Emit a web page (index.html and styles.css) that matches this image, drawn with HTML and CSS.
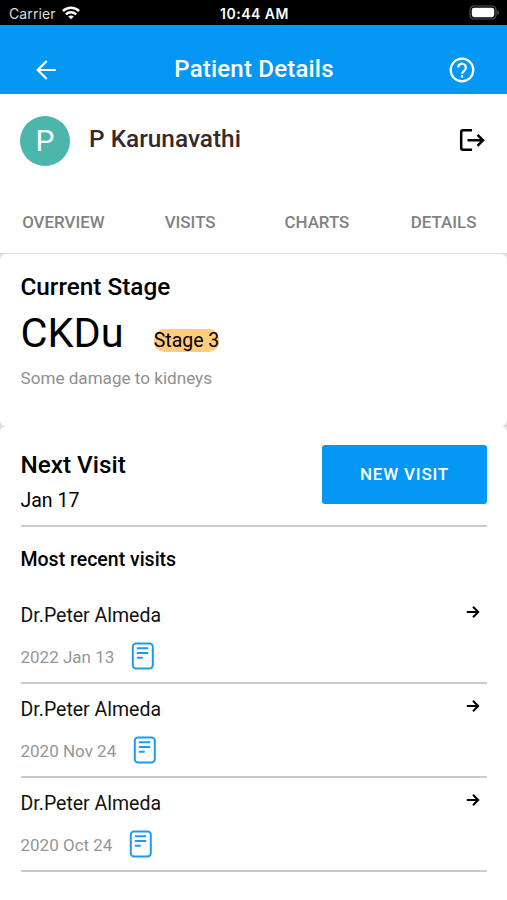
FILE: index.html
```html
<!DOCTYPE html>
<html lang="en">
<head>
<meta charset="utf-8">
<title>Patient Details</title>
<link rel="stylesheet" href="styles.css">
</head>
<body>
<div class="status">
  <div class="carrier"><span>Carrier</span>
    <svg width="18" height="14" viewBox="0 0 18 14" fill="none" stroke="#fff" stroke-width="2.500"><path d="M.9 5C5.500 .6 12.500 .6 17.100 5M3.900 8.300c2.900-2.700 7.300-2.700 10.200 0"/><path d="M9 13.300 6.200 10.500c1.500-1.400 4.100-1.400 5.600 0z" fill="#fff" stroke="none"/></svg>
  </div>
  <div class="time">10:44 AM</div>
  <svg class="battery" width="31" height="16" viewBox="0 0 31 16"><rect x="1" y="1" width="26" height="13" rx="4" fill="none" stroke="#555" stroke-width="1.200"/><rect x="2.800" y="2.800" width="22.400" height="9.400" rx="2.400" fill="#fff"/><path d="M28.500 5.200v4.600c1.600-.5 1.600-4.100 0-4.600z" fill="#666"/></svg>
</div>
<header class="bar">
  <svg class="back" width="20" height="20" viewBox="0 0 20 20" fill="none" stroke="#fff" stroke-width="2.200"><path d="M19.800 10H1.700M10.700 1 1.700 10l9 9"/></svg>
  <h1>Patient Details</h1>
  <svg class="help" width="26" height="26" viewBox="0 0 26 26" fill="none" stroke="#fff" stroke-width="2.200"><circle cx="13" cy="13" r="11.300"/><path d="M9.100 10.600a3.900 3.900 0 1 1 6.300 3.100c-1.500 1.100-2.400 1.700-2.400 3.300"/><path d="M13 18.200v2.300"/></svg>
</header>
<section class="profile">
  <div class="avatar">P</div>
  <h2>P Karunavathi</h2>
  <svg class="exit" width="26" height="24" viewBox="0 0 26 24" fill="none" stroke="#000" stroke-width="2.500"><path d="M13 2.300H4.200q-2 0-2 2v15.400q0 2 2 2H13"/><path d="M8.500 12.300H24M18.500 6.800l5.500 5.500-5.500 5.500"/></svg>
</section>
<nav class="tabs"><a>OVERVIEW</a><a>VISITS</a><a>CHARTS</a><a>DETAILS</a></nav>
<main>
  <section class="card stage">
    <h3>Current Stage</h3>
    <div class="stage-row"><span class="disease">CKDu</span><span class="chip">Stage 3</span></div>
    <p>Some damage to kidneys</p>
  </section>
  <section class="card visits">
    <div class="next">
      <div><h3>Next Visit</h3><div class="date">Jan 17</div></div>
      <button>NEW VISIT</button>
    </div>
    <h4>Most recent visits</h4>
    <article>
      <div class="doctor"><span>Dr.Peter Almeda</span><svg width="14" height="14" viewBox="0 0 14 14"><path d="M.8 7H12M7 1.800 12.200 7 7 12.200"/></svg></div>
      <div class="when"><span>2022 Jan 13</span><svg width="24" height="28" viewBox="0 0 24 28"><rect x="1.800" y="1.500" width="20" height="25" rx="3.200"/><path d="M5.800 6.300h11.400M5.800 11h11.400M5.800 15.700h6"/></svg></div>
    </article>
    <article>
      <div class="doctor"><span>Dr.Peter Almeda</span><svg width="14" height="14" viewBox="0 0 14 14"><path d="M.8 7H12M7 1.800 12.200 7 7 12.200"/></svg></div>
      <div class="when"><span>2020 Nov 24</span><svg width="24" height="28" viewBox="0 0 24 28"><rect x="1.800" y="1.500" width="20" height="25" rx="3.200"/><path d="M5.800 6.300h11.400M5.800 11h11.400M5.800 15.700h6"/></svg></div>
    </article>
    <article>
      <div class="doctor"><span>Dr.Peter Almeda</span><svg width="14" height="14" viewBox="0 0 14 14"><path d="M.8 7H12M7 1.800 12.200 7 7 12.200"/></svg></div>
      <div class="when"><span>2020 Oct 24</span><svg width="24" height="28" viewBox="0 0 24 28"><rect x="1.800" y="1.500" width="20" height="25" rx="3.200"/><path d="M5.800 6.300h11.400M5.800 11h11.400M5.800 15.700h6"/></svg></div>
    </article>
  </section>
</main>
</body>
</html>
```
FILE: styles.css
```css
* { box-sizing: border-box; }
body { margin: 0; height: 900px; overflow: hidden; display: flex; flex-direction: column; background: #fff; font-family: Roboto, sans-serif; color: #000; }
h1, h2, h3, h4, p { margin: 0; font-weight: 500; }
svg { display: block; flex: none; }
.status { height: 25px; flex: none; background: #000; color: #fff; display: grid; grid-template-columns: 1fr auto 1fr; align-items: center; padding: 2px 7px 0 9px; font: 14px/20px Inter, sans-serif; }
.carrier { display: flex; align-items: center; gap: 6px; color: #ddd; letter-spacing: .1px; }
.carrier svg { margin-top: -2px; }
.time { font-weight: 600; font-size: 14px; letter-spacing: .5px; }
.battery { justify-self: end; margin-top: -1px; }
.bar { height: 69px; flex: none; background: #0497f3; color: #fff; display: grid; grid-template-columns: 1fr auto 1fr; align-items: center; padding: 22px 32px 2px 36px; }
.bar h1 { font-size: 24px; line-height: 30px; letter-spacing: .2px; margin: -1px 3px 0 0; }
.help { justify-self: end; }
.profile { height: 97px; flex: none; display: flex; align-items: center; padding: 0 22px 3px 20px; }
.avatar { width: 50px; height: 50px; border-radius: 50%; background: #4db6ac; color: #fff; font-size: 30px; line-height: 49px; text-align: center; }
.profile h2 { margin-left: 19px; font-size: 24.400px; line-height: 30px; color: #352a2a; margin-top: -5px; }
.exit { margin-left: auto; margin-top: -3px; }
.tabs { height: 62px; flex: none; display: grid; grid-template-columns: repeat(4, 1fr); text-align: center; font-size: 16.900px; font-weight: 500; line-height: 62px; color: #828282; }
main { flex: 1; background: #dedede; border-top: 1px solid #dedede; }
.card { background: #fff; border-radius: 6px; padding: 0 20px 0 20.500px; }
.stage { height: 172px; padding-top: 18px; }
.card h3 { font-size: 24.300px; line-height: 30px; }
.stage-row { display: flex; height: 57px; gap: 30px; }
.disease { font-size: 41.500px; line-height: 61px; }
.chip { font-size: 19.500px; line-height: 23px; height: 23px; background: #ffcc80; border-radius: 10px; margin-top: 27px; }
.stage p { font-size: 17.100px; line-height: 26px; font-weight: 400; color: #8f8f8f; margin-top: 6px; }
.visits { height: 474px; padding-top: 19px; border-radius: 6px 6px 0 0; }
.next { display: flex; justify-content: space-between; height: 82px; border-bottom: 2px solid #cbcbcb; }
.next h3 { margin-top: 5px; }
.date { font-size: 19.500px; line-height: 28px; margin-top: 7px; }
.next button { width: 165px; height: 59px; border: 0; border-radius: 3px; padding: 0 0 2px; background: #0497f3; color: #fff; font: 500 17px Roboto, sans-serif; letter-spacing: .8px; }
.visits h4 { font-size: 19.500px; line-height: 28px; margin-top: 19px; margin-bottom: 16px; }
article { height: 94px; border-bottom: 2px solid #cbcbcb; padding-top: 12px; }
.doctor { display: flex; justify-content: space-between; padding-right: 7px; font-size: 19.500px; line-height: 28px; color: #111; }
.doctor svg { margin-top: 3px; fill: none; stroke: #000; stroke-width: 2; }
.when { display: flex; align-items: center; gap: 16.300px; margin-top: 12px; font-size: 17px; line-height: 28px; color: #969696; }
.when span { padding-top: 1px; margin-bottom: -1px; }
.when svg { fill: none; stroke: #1b9cf2; stroke-width: 2; }
```
